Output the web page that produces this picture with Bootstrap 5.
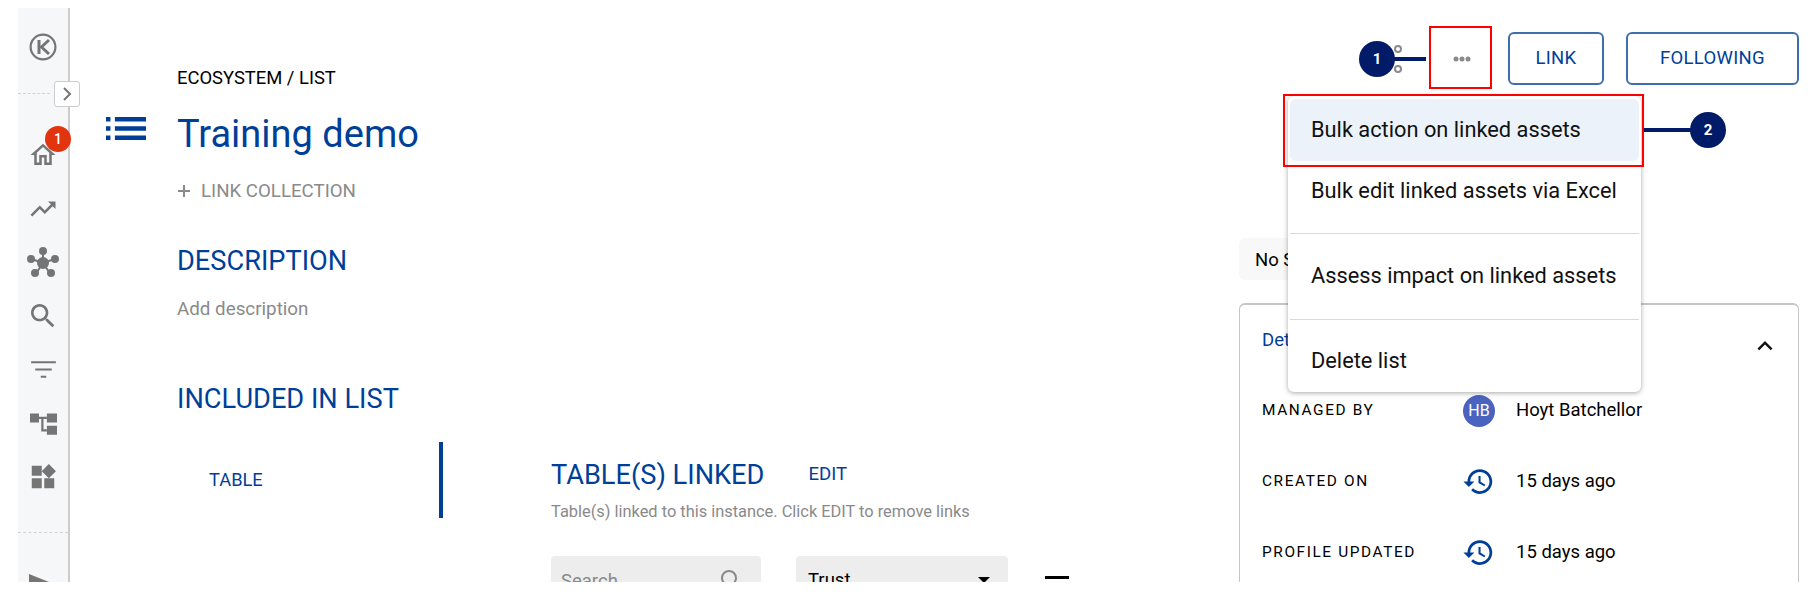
<!DOCTYPE html>
<html lang="en">
<head>
    <meta charset="UTF-8">
    <title>Training demo</title>
    <link href="https://cdn.jsdelivr.net/npm/bootstrap@5.3.0/dist/css/bootstrap.min.css" rel="stylesheet">
    <style>
        body { background: #fff; font-family: Roboto, "Liberation Sans", sans-serif; font-size: 18.5px; color: #000; overflow: hidden; }
        .app-frame { margin-top: 8px; height: 574px; overflow: hidden; position: relative; }

        /* left rail */
        .rail { width: 52px; margin-left: 18px; flex: none; background: #f6f7f9; border-right: 2px solid #ccc; padding-top: 25px; }
        .rail-logo { height: 26px; }
        .rail-dash { height: 0; border-top: 1px dashed #d4d4d4; }
        .rail-slot { height: 54px; position: relative; }
        .rail-slot-short { height: 52px; }
        .rail-toggle { position: absolute; left: 54px; top: 73px; width: 26px; height: 26px; background: #fff; border: 1px solid #ccc; border-radius: 3px; }
        .rail-badge { position: absolute; left: 45px; top: 118px; width: 26px; height: 26px; background: #e1340f; color: #fff; font-size: 14px; font-weight: 500; }

        /* main column */
        .main-col { width: 1169px; flex: none; }
        .list-icon { margin: 109px 31px 0 36px; flex: none; }
        .crumb { margin-top: 58px; line-height: 24px; font-size: 18.4px; }
        .page-title { margin: 20px 0 0; line-height: 48px; font-size: 38px; font-weight: 400; color: #003f98; }
        .link-coll { margin-top: 21px; line-height: 24px; color: #8a8a8a; font-size: 18.7px; gap: 10px; }
        .sec-head { line-height: 32px; font-size: 27.2px; font-weight: 400; color: #003f98; margin: 0; }
        .sec-desc { margin-top: 42px; }
        .sec-incl { margin-top: 62px; }
        .add-desc { margin-top: 20px; line-height: 24px; color: #8a8a8a; font-size: 18.8px; }
        .tab-side { width: 266px; height: 76px; margin-top: 27px; padding-left: 32px; border-right: 4px solid #003f98; color: #003f98; flex: none; font-size: 18.3px; }
        .linked-pane { margin-left: 108px; margin-top: 44px; }
        .edit-link { color: #003f98; margin-left: 44px; font-size: 18.6px; }
        .linked-sub { margin-top: 11px; line-height: 20px; font-size: 16.4px; color: #8a8a8a; }
        .filter-row { margin-top: 34px; }
        .search-wrap { width: 210px; position: relative; }
        .filter-input, .filter-select { height: 50px; background-color: #ededed; border: 0; border-radius: 4px; font-size: 18.5px; }
        .filter-input { padding: 0 40px 0 10px; }
        .filter-input::placeholder { color: #8a8a8a; }
        .search-glass { position: absolute; right: 18px; top: 12px; }
        .filter-select { width: 212px; margin-left: 35px; padding: 0 12px; color: #000; font-weight: 400; --bs-form-select-bg-img: none; }
        .trust-wrap { position: relative; }
        .trust-caret { position: absolute; right: 18px; top: 21px; width: 0; height: 0; border-left: 6px solid transparent; border-right: 6px solid transparent; border-top: 6px solid #000; }
        .dash-line { width: 24px; height: 3px; background: #000; margin: 20px 0 0 37px; }

        /* right column */
        .side-col { width: 560px; flex: none; }
        .top-tools { height: 53px; margin-top: 24px; }
        .dots-slot { width: 62px; margin-left: 25px; margin-right: 17px; padding-left: 4px; }
        .tool-btn { height: 53px; color: #003f98; border: 2px solid #3e6fad; border-radius: 6px; background: #fff; font-size: 18.5px; padding: 0; letter-spacing: .3px; }
        .btn-link-asset { width: 96px; margin-right: 22px; }
        .btn-follow { width: 173px; }
        .status-chip { width: 220px; height: 42px; margin-top: 153px; padding: 3px 0 0 16px; background: #f8f8f8; border-radius: 6px; }
        .detail-card { width: 560px; margin-top: 23px; border: 1px solid #c6c6c6; border-top: 2px solid #c6c6c6; border-radius: 6px; padding: 0 18px 0 22px; height: 400px; }
        .detail-head { height: 70px; color: #003f98; padding-top: 2px; }
        .detail-chevron { margin-top: 10px; }
        .detail-row { height: 71px; }
        .detail-label { width: 201px; font-size: 15.4px; letter-spacing: 1.6px; flex: none; }
        .detail-cell { width: 53px; flex: none; }
        .avatar-hb { width: 32px; height: 32px; background: #4a63bf; color: #fff; font-size: 16px; }
        .clock-icon { margin-left: -1px; }

        /* overlays */
        .action-menu { position: absolute; left: 1288px; top: 88px; width: 353px; height: 296px; margin: 0; padding: 3px 2px; border: 0; border-radius: 6px; box-shadow: 0 1px 5px rgba(0,0,0,.35); font-size: 21.8px; display: block; }
        .action-menu .dropdown-item { height: 61px; padding: 0 21px; display: flex; align-items: center; color: #111; border-radius: 6px; }
        .action-menu .is-hit { height: 62px; background: #ebf2f9; }
        .action-menu .dropdown-divider { margin: 0; border-color: #d9d9d9; }
        .mark-box { position: absolute; z-index: 1001; border: 2px solid #f00; }
        .box-dots { left: 1429px; top: 18px; width: 63px; height: 63px; }
        .box-item { left: 1283px; top: 86px; width: 361px; height: 73px; }
        .step-dot { position: absolute; z-index: 1001; width: 36px; height: 36px; background: #021b68; color: #fff; font-size: 15px; font-weight: 700; }
        .step-line { position: absolute; z-index: 1001; height: 4px; background: #021b68; }
        .dot-one { left: 1359px; top: 33px; }
        .line-one { left: 1390px; top: 49px; width: 36px; }
        .dot-two { left: 1690px; top: 104px; }
        .line-two { left: 1644px; top: 120px; width: 47px; }
    </style>
</head>
<body>
<div class="app-frame d-flex">
    <!-- left rail -->
    <div class="rail">
        <div class="rail-logo d-flex justify-content-center">
            <svg width="28" height="28" viewBox="0 0 28 28" fill="none" stroke="#757575"><circle cx="14" cy="14" r="12.4" stroke-width="2.2"/><path d="M10 7v14" stroke-width="3"/><path d="M20 7l-7.500 7 7.500 7" stroke-width="3"/></svg>
        </div>
        <div class="rail-dash" style="margin:34px 18px 34px 0"></div>
        <div class="rail-slot d-flex align-items-center justify-content-center">
            <svg width="30" height="30" viewBox="0 0 24 24" fill="#757575"><path d="M12 5.690l5 4.500V18h-2v-6H9v6H7v-7.810l5-4.500M12 3L2 12h3v8h6v-6h2v6h6v-8h3L12 3z"/></svg>
        </div>
        <div class="rail-slot d-flex align-items-center justify-content-center">
            <svg width="30" height="30" viewBox="0 0 24 24" fill="#757575"><path d="M16 6l2.290 2.290-4.880 4.880-4-4L2 16.590 3.410 18l6-6 4 4 6.300-6.290L22 12V6z"/></svg>
        </div>
        <div class="rail-slot d-flex align-items-center justify-content-center">
            <svg width="34" height="34" viewBox="0 0 34 34" fill="#757575" stroke="#757575" stroke-width="2"><path d="M17 17V5M17 17L5.500 13M17 17L28.500 13M17 17L9 29M17 17L25 29"/><circle cx="17" cy="17" r="5"/><circle cx="17" cy="5" r="3"/><circle cx="5" cy="13" r="3"/><circle cx="29" cy="13" r="3"/><circle cx="9" cy="27" r="3"/><circle cx="25" cy="27" r="3"/></svg>
        </div>
        <div class="rail-slot rail-slot-short d-flex align-items-center justify-content-center">
            <svg width="32" height="32" viewBox="0 0 24 24" fill="#757575"><path d="M15.500 14h-.79l-.28-.27C15.410 12.590 16 11.110 16 9.500 16 5.910 13.090 3 9.500 3S3 5.910 3 9.500 5.910 16 9.500 16c1.610 0 3.090-.59 4.230-1.570l.27.28v.79l5 4.990L20.490 19l-4.990-5zm-6 0C7.010 14 5 11.990 5 9.500S7.010 5 9.500 5 14 7.010 14 9.500 11.990 14 9.500 14z"/></svg>
        </div>
        <div class="rail-slot d-flex align-items-center justify-content-center">
            <svg width="33" height="33" viewBox="0 0 24 24" fill="#757575"><path d="M10 18h4v-1.500h-4V18zM3 6v1.500h18V6H3zm3 6.700h12v-1.500H6v1.500z"/></svg>
        </div>
        <div class="rail-slot d-flex align-items-center justify-content-center">
            <svg width="27" height="25" viewBox="0 0 24 22" fill="#757575"><path d="M0 2h8v8H0zM15 2h9v8h-9zM15 13h9v8h-9z"/><path d="M8 5h7v2h-3v9h3v2h-5V7H8z"/></svg>
        </div>
        <div class="rail-slot d-flex align-items-center justify-content-center">
            <svg width="30" height="30" viewBox="0 0 24 24" fill="#757575"><path d="M13 13v8h8v-8h-8zM3 21h8v-8H3v8zM3 3v8h8V3H3zm13.660-1.310L11 7.340 16.660 13l5.660-5.660-5.660-5.650z"/></svg>
        </div>
        <div class="rail-dash" style="margin-top:28px"></div>
        <div class="d-flex" style="margin:41px 0 0 11px">
            <svg width="22" height="16" viewBox="0 0 22 16" fill="#757575"><path d="M0 0l20 8v8H0z"/></svg>
        </div>
    </div>
    <div class="rail-toggle d-flex align-items-center justify-content-center">
        <svg width="10" height="14" viewBox="0 0 10 14" fill="none" stroke="#757575" stroke-width="2"><path d="M2 1l6 6-6 6"/></svg>
    </div>
    <div class="rail-badge rounded-circle d-flex align-items-center justify-content-center">1</div>

    <!-- main content -->
    <div class="main-col d-flex">
        <svg class="list-icon" width="40" height="23" viewBox="3 7 18 10" preserveAspectRatio="none" fill="#003f98"><path d="M3 13h2v-2H3v2zm0 4h2v-2H3v2zm0-8h2V7H3v2zm4 4h14v-2H7v2zm0 4h14v-2H7v2zM7 7v2h14V7H7z"/></svg>
        <div class="flex-grow-1">
            <div class="crumb">ECOSYSTEM / LIST</div>
            <h1 class="page-title">Training demo</h1>
            <div class="link-coll d-flex align-items-center">
                <svg width="14" height="14" viewBox="0 0 14 14" fill="#8a8a8a"><path d="M6 1h2v5h5v2H8v5H6V8H1V6h5z"/></svg>
                <span>LINK COLLECTION</span>
            </div>
            <h2 class="sec-head sec-desc">DESCRIPTION</h2>
            <div class="add-desc">Add description</div>
            <h2 class="sec-head sec-incl">INCLUDED IN LIST</h2>
            <div class="d-flex">
                <div class="tab-side d-flex align-items-center">TABLE</div>
                <div class="linked-pane">
                    <div class="d-flex align-items-center">
                        <h2 class="sec-head">TABLE(S) LINKED</h2>
                        <span class="edit-link">EDIT</span>
                    </div>
                    <div class="linked-sub">Table(s) linked to this instance. Click EDIT to remove links</div>
                    <div class="filter-row d-flex">
                        <div class="search-wrap">
                            <input class="form-control filter-input" placeholder="Search">
                            <svg class="search-glass" width="24" height="24" viewBox="0 0 24 24" fill="none" stroke="#8a8a8a" stroke-width="2"><circle cx="10" cy="10" r="7"/><path d="M15 15l6 6"/></svg>
                        </div>
                        <div class="trust-wrap">
                            <select class="form-select filter-select"><option>Trust</option></select>
                            <span class="trust-caret"></span>
                        </div>
                        <div class="dash-line"></div>
                    </div>
                </div>
            </div>
        </div>
    </div>

    <!-- right column -->
    <div class="side-col">
        <div class="top-tools d-flex justify-content-end align-items-center">
            <svg width="14" height="32" viewBox="0 0 14 32" fill="none" stroke="#8a8a8a" stroke-width="2"><circle cx="8" cy="6" r="3"/><circle cx="8" cy="26" r="3"/></svg>
            <div class="dots-slot d-flex justify-content-center">
                <svg width="18" height="6" viewBox="0 0 18 6" fill="#8a8a8a"><circle cx="3" cy="3" r="2.500"/><circle cx="9" cy="3" r="2.500"/><circle cx="15" cy="3" r="2.500"/></svg>
            </div>
            <button class="btn tool-btn btn-link-asset">LINK</button>
            <button class="btn tool-btn btn-follow">FOLLOWING</button>
        </div>
        <div class="status-chip d-flex align-items-center">No Status</div>
        <div class="card detail-card">
            <div class="detail-head d-flex align-items-center justify-content-between">
                <span>Details</span>
                <svg class="detail-chevron" width="30" height="30" viewBox="0 0 24 24" fill="#111"><path d="M12 8l-6 6 1.410 1.410L12 10.830l4.590 4.580L18 14z"/></svg>
            </div>
            <div class="detail-row d-flex align-items-center">
                <span class="detail-label">MANAGED BY</span>
                <div class="detail-cell"><span class="avatar-hb rounded-circle d-flex align-items-center justify-content-center">HB</span></div>
                <span>Hoyt Batchellor</span>
            </div>
            <div class="detail-row d-flex align-items-center">
                <span class="detail-label">CREATED ON</span>
                <div class="detail-cell d-flex">
                    <svg class="clock-icon" width="33" height="33" viewBox="0 0 24 24" fill="#003f98"><path d="M13 3c-4.970 0-9 4.030-9 9H1l3.890 3.890.07.14L9 12H6c0-3.870 3.130-7 7-7s7 3.130 7 7-3.130 7-7 7c-1.930 0-3.680-.79-4.940-2.060l-1.420 1.420C8.270 19.990 10.510 21 13 21c4.970 0 9-4.030 9-9s-4.030-9-9-9zm-1 5v5l4.280 2.540.72-1.210-3.500-2.080V8H12z"/></svg>
                </div>
                <span>15 days ago</span>
            </div>
            <div class="detail-row d-flex align-items-center">
                <span class="detail-label">PROFILE UPDATED</span>
                <div class="detail-cell d-flex">
                    <svg class="clock-icon" width="33" height="33" viewBox="0 0 24 24" fill="#003f98"><path d="M13 3c-4.970 0-9 4.030-9 9H1l3.890 3.890.07.14L9 12H6c0-3.870 3.130-7 7-7s7 3.130 7 7-3.130 7-7 7c-1.930 0-3.680-.79-4.940-2.060l-1.420 1.420C8.270 19.990 10.510 21 13 21c4.970 0 9-4.030 9-9s-4.030-9-9-9zm-1 5v5l4.280 2.540.72-1.210-3.500-2.080V8H12z"/></svg>
                </div>
                <span>15 days ago</span>
            </div>
        </div>
    </div>

    <!-- open menu and numbered callouts -->
    <div class="dropdown-menu action-menu">
        <a class="dropdown-item is-hit" href="#">Bulk action on linked assets</a>
        <a class="dropdown-item" href="#">Bulk edit linked assets via Excel</a>
        <div class="dropdown-divider" style="margin-top:11px"></div>
        <a class="dropdown-item" href="#" style="margin-top:12px">Assess impact on linked assets</a>
        <div class="dropdown-divider" style="margin-top:12px"></div>
        <a class="dropdown-item" href="#" style="margin-top:11px">Delete list</a>
    </div>
    <div class="mark-box box-dots"></div>
    <div class="mark-box box-item"></div>
    <div class="step-line line-one"></div>
    <div class="step-dot dot-one rounded-circle d-flex align-items-center justify-content-center">1</div>
    <div class="step-line line-two"></div>
    <div class="step-dot dot-two rounded-circle d-flex align-items-center justify-content-center">2</div>
</div>
<script src="https://cdn.jsdelivr.net/npm/bootstrap@5.3.0/dist/js/bootstrap.bundle.min.js"></script>
</body>
</html>
